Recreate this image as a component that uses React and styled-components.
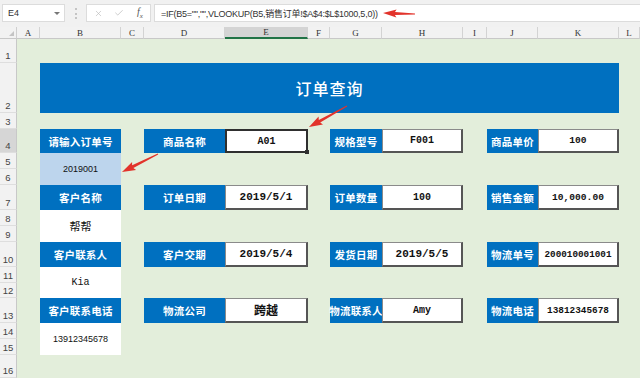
import React from 'react';
import styled, { createGlobalStyle } from 'styled-components';
import { X, Check } from 'lucide-react';

const GlobalStyle = createGlobalStyle`
  html, body { margin: 0; padding: 0; background: #e3eedb; }
  body {
    width: 640px; height: 378px; overflow: hidden;
    font-family: "Noto Sans CJK SC", "Liberation Sans", sans-serif;
  }
`;

const Page = styled.div`
  position: relative;
  width: 640px;
  height: 378px;
  overflow: hidden;
  display: flex;
  flex-direction: column;
  background: #e3eedb;
`;

const Toolbar = styled.div`
  display: flex;
  align-items: stretch;
  height: 27px;
  box-sizing: border-box;
  padding: 4px 0 5px 2px;
  background: #f1f1f1;
`;

const NameBox = styled.div`
  width: 63px;
  box-sizing: border-box;
  background: #fff;
  border: 1px solid #dcdcdc;
  display: flex;
  align-items: center;
  justify-content: space-between;
  padding: 0 4px 0 5px;
  font: 9px "Liberation Sans", sans-serif;
  color: #333;
`;

const Caret = styled.span`
  width: 0; height: 0;
  border-left: 3px solid transparent;
  border-right: 3px solid transparent;
  border-top: 3px solid #777;
`;

const Grip = styled.span`
  align-self: center;
  height: 11px;
  margin: 0 9px 0 10px;
  border-left: 2px dotted #c4c4c4;
`;

const FuncBox = styled.div`
  width: 65px;
  box-sizing: border-box;
  background: #fff;
  border: 1px solid #dcdcdc;
  display: flex;
  align-items: center;
  padding-left: 7px;
  gap: 11px;
  color: #b5b5b5;
`;

const Fx = styled.span`
  font: italic 10px "Liberation Serif", serif;
  color: #555;
  margin-left: 2px;
  sub { font-size: 7px; }
`;

const FormulaBox = styled.div`
  flex: 1;
  margin-left: 3px;
  box-sizing: border-box;
  background: #fff;
  border: 1px solid #dcdcdc;
  border-right: none;
  display: flex;
  align-items: center;
  padding-left: 6px;
  font: 9px "Liberation Sans", "Noto Sans CJK SC", sans-serif;
  letter-spacing: -0.25px;
  color: #333;
`;

const Sheet = styled.div`
  display: grid;
  grid-template-columns: 17px 23px 81px 23px 81px 83px 22px 52px 81px 24px 51px 81px 1fr;
  grid-template-rows: 12px 24px 50px 16px 24px 16px 16px 25px 16px 16px 25px 16px 15px 25px 16px 16px 23px;
  background: #e3eedb;
`;

const Corner = styled.div`
  grid-column: 1; grid-row: 1;
  background: #f2f2f2;
  border-right: 1px solid #cfcfcf;
  border-bottom: 1px solid #c8c8c8;
  position: relative;
  &::after {
    content: "";
    position: absolute; right: 2px; bottom: 2px;
    border-left: 5px solid transparent;
    border-bottom: 5px solid #c4c4c4;
  }
`;

const ColHead = styled.div`
  grid-row: 1;
  grid-column: ${p => p.$col};
  display: flex;
  align-items: center;
  justify-content: center;
  box-sizing: border-box;
  background: ${p => (p.$active ? '#d4d4d4' : '#f2f2f2')};
  border-right: 1px solid #d3d3d3;
  border-bottom: ${p => (p.$active ? '2px solid #217346' : '1px solid #c8c8c8')};
  font: 9px "Liberation Serif", serif;
  color: #333;
`;

const RowHead = styled.div`
  grid-column: 1;
  grid-row: ${p => p.$row};
  display: flex;
  align-items: flex-end;
  justify-content: center;
  box-sizing: border-box;
  padding-bottom: 1px;
  background: ${p => (p.$active ? '#d6d6d6' : '#f2f2f2')};
  border-right: 1px solid #c8c8c8;
  border-bottom: 1px solid #dedede;
  font: 9.5px "Liberation Sans", sans-serif;
  color: #444;
`;

const Banner = styled.div`
  grid-column: 3 / 13;
  grid-row: 3;
  background: #0070c0;
  display: flex;
  align-items: center;
  justify-content: center;
  color: #fff;
  font-size: 16px;
  font-weight: 500;
  letter-spacing: 1px;
`;

const Label = styled.div`
  grid-column: ${p => p.$col};
  grid-row: ${p => p.$row};
  background: #0070c0;
  color: #fff;
  display: flex;
  align-items: center;
  justify-content: center;
  font-size: 10.5px;
  font-weight: 700;
  letter-spacing: 0.2px;
  white-space: nowrap;
`;

const InfoCell = styled.div`
  grid-column: 3;
  grid-row: ${p => p.$row};
  background: ${p => (p.$input ? '#bdd5ed' : '#ffffff')};
  display: flex;
  align-items: center;
  justify-content: center;
  color: #111;
  font-family: ${p => (p.$mono ? '"Liberation Mono", monospace' : '"Liberation Sans", "Noto Sans CJK SC", sans-serif')};
  font-size: ${p => p.$size || 9}px;
`;

const Value = styled.div`
  grid-column: ${p => p.$col};
  grid-row: ${p => p.$row};
  position: relative;
  box-sizing: border-box;
  background: #fff;
  border-style: solid;
  border-width: ${p => (p.$selected ? '2px' : '1px 2px 2px 1px')};
  border-color: ${p => (p.$selected ? '#2f2f2f' : '#8a8a8a #555 #555 #8a8a8a')};
  display: flex;
  align-items: center;
  justify-content: center;
  font-family: "Liberation Mono", "Noto Sans CJK SC", monospace;
  font-weight: 700;
  font-size: ${p => p.$size || 10}px;
  color: #111;
  white-space: nowrap;
`;

const Handle = styled.span`
  position: absolute;
  right: -3px;
  bottom: -3px;
  width: 4px;
  height: 4px;
  background: #2f2f2f;
`;

const Overlay = styled.svg`
  position: absolute;
  left: 0; top: 0;
  pointer-events: none;
`;

function arrowPoints(tx, ty, hx, hy, headLen = 11, headW = 4.5, shaftW = 1.6, tailW = 0.4) {
  const dx = hx - tx, dy = hy - ty;
  const L = Math.hypot(dx, dy);
  const ux = dx / L, uy = dy / L;
  const nx = -uy, ny = ux;
  const bx = hx - ux * headLen, by = hy - uy * headLen;
  const p = (x, y) => `${x.toFixed(1)},${y.toFixed(1)}`;
  return [
    p(tx + nx * tailW, ty + ny * tailW),
    p(bx + nx * shaftW, by + ny * shaftW),
    p(bx + nx * headW - ux * 1.5, by + ny * headW - uy * 1.5),
    p(hx, hy),
    p(bx - nx * headW - ux * 1.5, by - ny * headW - uy * 1.5),
    p(bx - nx * shaftW, by - ny * shaftW),
    p(tx - nx * tailW, ty - ny * tailW),
  ].join(' ');
}

const cols = ['A', 'B', 'C', 'D', 'E', 'F', 'G', 'H', 'I', 'J', 'K', 'L'];

const formRows = [
  { row: 5, items: [['商品名称', 'A01', true], ['规格型号', 'F001'], ['商品单价', '100', false, 9.6]] },
  { row: 8, items: [['订单日期', '2019/5/1', false, 11], ['订单数量', '100'], ['销售金额', '10,000.00', false, 9.6]] },
  { row: 11, items: [['客户交期', '2019/5/4', false, 11], ['发货日期', '2019/5/5', false, 11], ['物流单号', '200010001001', false, 9.3]] },
  { row: 14, items: [['物流公司', '跨越', false, 12], ['物流联系人', 'Amy'], ['物流电话', '13812345678', false, 9.4]] },
];

const pairCols = [[5, 6], [8, 9], [11, 12]];

export default function App() {
  return (
    <Page>
      <GlobalStyle />
      <Toolbar>
        <NameBox>E4<Caret /></NameBox>
        <Grip />
        <FuncBox>
          <X size={9} strokeWidth={1.6} />
          <Check size={10} strokeWidth={1.6} />
          <Fx>f<sub>x</sub></Fx>
        </FuncBox>
        <FormulaBox>=IF(B5="","",VLOOKUP(B5,销售订单!$A$4:$L$1000,5,0))</FormulaBox>
      </Toolbar>
      <Sheet>
        <Corner />
        {cols.map((c, i) => (
          <ColHead key={c} $col={i + 2} $active={c === 'E'}>{c}</ColHead>
        ))}
        {Array.from({ length: 16 }, (_, i) => (
          <RowHead key={i} $row={i + 2} $active={i === 3}>{i + 1}</RowHead>
        ))}
        <Banner>订单查询</Banner>

        <Label $col={3} $row={5}>请输入订单号</Label>
        <InfoCell $row="6 / 8" $input>2019001</InfoCell>
        <Label $col={3} $row={8}>客户名称</Label>
        <InfoCell $row="9 / 11" $size={11}>帮帮</InfoCell>
        <Label $col={3} $row={11}>客户联系人</Label>
        <InfoCell $row="12 / 14" $mono $size={10}>Kia</InfoCell>
        <Label $col={3} $row={14}>客户联系电话</Label>
        <InfoCell $row="15 / 17" $size={9}>13912345678</InfoCell>

        {formRows.map(({ row, items }) =>
          items.map(([label, value, selected, size], i) => (
            <React.Fragment key={`${row}-${i}`}>
              <Label $col={pairCols[i][0]} $row={row}>{label}</Label>
              <Value $col={pairCols[i][1]} $row={row} $selected={selected} $size={size}>
                {value}
                {selected && <Handle />}
              </Value>
            </React.Fragment>
          ))
        )}
      </Sheet>
      <Overlay width="640" height="378" viewBox="0 0 640 378">
        <polygon points={arrowPoints(415, 14, 383, 13, 12, 4, 1.5, 0.5)} fill="#e2332b" />
        <polygon points={arrowPoints(347, 106, 309, 127, 12, 4.5, 1.5, 0.4)} fill="#e2332b" />
        <polygon points={arrowPoints(158, 154, 122, 172, 12, 4.5, 1.5, 0.4)} fill="#e2332b" />
      </Overlay>
    </Page>
  );
}
